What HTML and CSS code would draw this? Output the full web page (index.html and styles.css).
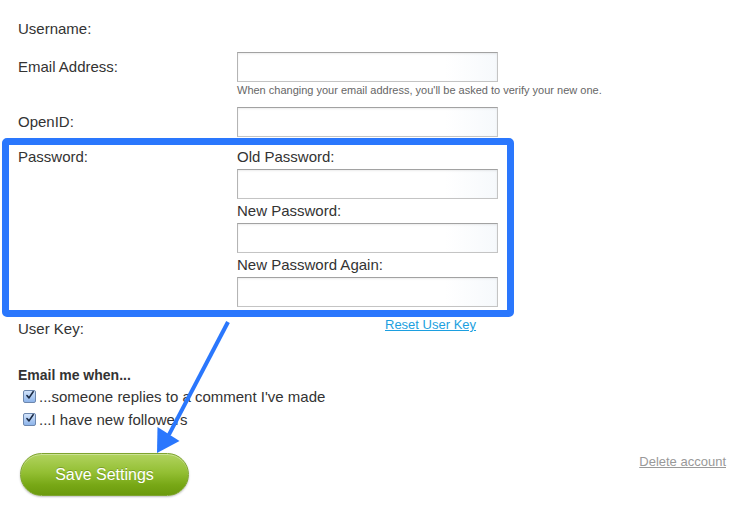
FILE: index.html
```html
<!DOCTYPE html>
<html>
<head>
<meta charset="utf-8">
<link rel="stylesheet" href="styles.css">
</head>
<body>
<div class="page">
  <form class="settings">
    <div class="row row-username">
      <div class="label">Username:</div>
      <div class="field"></div>
    </div>
    <div class="row row-email">
      <div class="label pad">Email Address:</div>
      <div class="field">
        <div class="input"></div>
        <div class="hint">When changing your email address, you'll be asked to verify your new one.</div>
      </div>
    </div>
    <div class="row row-openid">
      <div class="label pad">OpenID:</div>
      <div class="field"><div class="input"></div></div>
    </div>
    <div class="row row-password">
      <div class="label">Password:</div>
      <div class="field">
        <div class="sublabel">Old Password:</div>
        <div class="input"></div>
        <div class="sublabel">New Password:</div>
        <div class="input"></div>
        <div class="sublabel">New Password Again:</div>
        <div class="input"></div>
      </div>
    </div>
    <div class="row row-userkey">
      <div class="label">User Key:</div>
      <div class="field key-field"><a class="reset" href="#">Reset User Key</a></div>
    </div>
    <div class="notify">
      <div class="notify-title">Email me when...</div>
      <label class="check"><span class="box"><svg viewBox="0 0 13 13" width="13" height="13"><path d="M2.5 6.5 L5.2 9.6 L10.6 1.6" fill="none" stroke="#1b2b45" stroke-width="2.1" stroke-linecap="round" stroke-linejoin="round"/></svg></span>...someone replies to a comment I've made</label>
      <label class="check"><span class="box"><svg viewBox="0 0 13 13" width="13" height="13"><path d="M2.5 6.5 L5.2 9.6 L10.6 1.6" fill="none" stroke="#1b2b45" stroke-width="2.1" stroke-linecap="round" stroke-linejoin="round"/></svg></span>...I have new followers</label>
    </div>
    <div class="actions">
      <button type="button" class="save">Save Settings</button>
      <a class="delete" href="#">Delete account</a>
    </div>
  </form>
  <div class="highlight"></div>
  <svg class="arrow" width="740" height="505" viewBox="0 0 740 505">
    <polygon points="229.8,323 226.2,321 165,438 171,435" fill="#2a77fd"/>
    <polygon points="157,453 157.5,427 179.5,441" fill="#2a77fd"/>
  </svg>
</div>
</body>
</html>
```

FILE: styles.css
```css
* { box-sizing: border-box; }
html, body { margin: 0; padding: 0; background: #fff; }
body {
  font-family: "Liberation Sans", Arial, Helvetica, sans-serif;
  color: #333;
  font-size: 15px;
}
.page {
  position: relative;
  width: 740px;
  height: 505px;
  overflow: hidden;
}
.settings {
  padding: 20px 14px 0 18px;
}
.row {
  display: grid;
  grid-template-columns: 219px 261px;
}
.label {
  line-height: 17px;
  font-size: 15px;
}
.label.pad { padding-top: 6px; }
.row-username { height: 17px; }
.row-email { margin-top: 15px; }
.row-openid { margin-top: 10px; }
.row-password { margin-top: 11px; }
.row-userkey { margin-top: 13px; }
.input {
  height: 30px;
  width: 261px;
  border: 1px solid #c4c4c4;
  border-top-color: #a2a2a2;
  border-left-color: #b4b4b4;
  background: linear-gradient(90deg, #ffffff 0%, #ffffff 80%, #f6f9fc 100%);
  box-shadow: inset 0 1px 2px rgba(0,0,0,0.08);
}
.hint {
  font-size: 11px;
  line-height: 13px;
  color: #666;
  margin-top: 2px;
  white-space: nowrap;
}
.sublabel {
  line-height: 17px;
  margin-bottom: 4px;
}
.row-password .input { margin-bottom: 3px; }
.row-password .input:last-child { margin-bottom: 0; }
.key-field {
  margin-top: -3px;
}
.reset {
  display: block;
  width: fit-content;
  margin-left: 148px;
  font-size: 13px;
  line-height: 15px;
  color: #1c9fe0;
  text-decoration: underline;
}
.notify { margin-top: 30px; }
.notify-title {
  font-weight: bold;
  font-size: 14px;
  line-height: 16px;
}
.check {
  display: flex;
  align-items: center;
  height: 23px;
  padding-left: 5px;
  font-size: 15px;
  line-height: 17px;
}
.check:first-of-type { margin-top: 2px; }
.box {
  width: 13px;
  height: 13px;
  margin-right: 3px;
  border: 1px solid #6d87ad;
  border-radius: 2px;
  background: linear-gradient(#d3e4fb, #8db4ea);
  display: flex;
  align-items: center;
  justify-content: center;
  overflow: visible;
}
.box svg { display: block; margin-top: -2px; margin-left: 1px; }
.actions {
  display: flex;
  justify-content: space-between;
  align-items: flex-start;
  margin-top: 22px;
}
.save {
  margin-left: 2px;
  width: 169px;
  height: 43px;
  border-radius: 22px;
  border: 1px solid #7ea42f;
  background: linear-gradient(#b1d35f 0%, #93bf33 45%, #78a816 75%, #6b9a0d 100%);
  box-shadow: 0 1px 2px rgba(0,0,0,0.25), inset 0 1px 0 rgba(255,255,255,0.35);
  color: #fff;
  font-family: "Liberation Sans", Arial, Helvetica, sans-serif;
  font-size: 16px;
  text-shadow: 0 -1px 0 rgba(60,90,0,0.35);
  padding: 0;
  cursor: pointer;
}
.delete {
  font-size: 13px;
  line-height: 15px;
  margin-top: 1px;
  color: #999;
  text-decoration: underline;
}
.highlight {
  position: absolute;
  left: 2px;
  top: 138px;
  width: 512px;
  height: 179px;
  border: 7px solid #2a77fd;
  border-radius: 5px;
  pointer-events: none;
}
.arrow {
  position: absolute;
  left: 0;
  top: 0;
  pointer-events: none;
}
```
